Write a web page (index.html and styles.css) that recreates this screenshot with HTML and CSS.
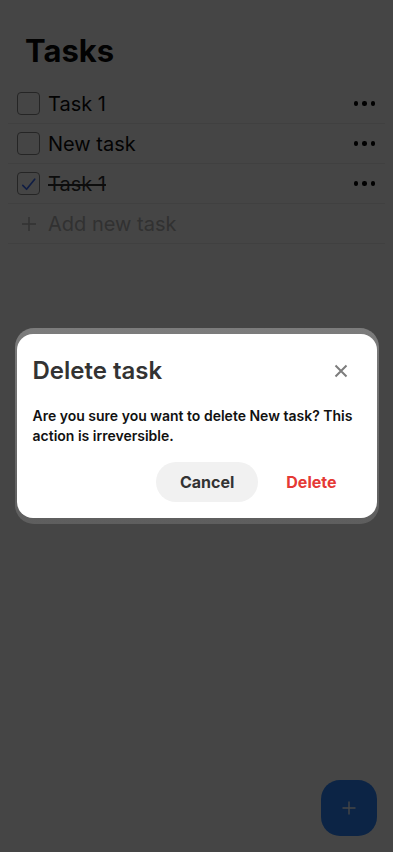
FILE: index.html
```html
<!DOCTYPE html>
<html lang="en">
<head>
<meta charset="utf-8">
<meta name="viewport" content="width=device-width, initial-scale=1">
<title>Tasks</title>
<link rel="stylesheet" href="styles.css">
</head>
<body>
<main class="page">
  <h1 class="title">Tasks</h1>
  <ul class="list">
    <li class="row">
      <span class="check"></span>
      <span class="label">Task 1</span>
      <span class="more"><i></i><i></i><i></i></span>
    </li>
    <li class="row">
      <span class="check"></span>
      <span class="label">New task</span>
      <span class="more"><i></i><i></i><i></i></span>
    </li>
    <li class="row">
      <span class="check checked">
        <svg viewBox="0 0 22 22" width="22" height="22"><path d="M5 12.5 L9 16.5 L17.5 6" fill="none" stroke="#3b6cf6" stroke-width="1.8" stroke-linecap="round" stroke-linejoin="round"/></svg>
      </span>
      <span class="label done">Task 1</span>
      <span class="more"><i></i><i></i><i></i></span>
    </li>
    <li class="row add">
      <span class="plus">
        <svg viewBox="0 0 16 16" width="16" height="16"><path d="M8 1 V15 M1 8 H15" stroke="#b8b8b8" stroke-width="1.5" fill="none"/></svg>
      </span>
      <span class="label muted">Add new task</span>
    </li>
  </ul>
  <button class="fab" aria-label="Add">
    <svg viewBox="0 0 16 16" width="16" height="16"><path d="M8 1.5 V14.5 M1.5 8 H14.5" stroke="#ffffff" stroke-width="1.4" fill="none"/></svg>
  </button>
</main>
<div class="overlay">
  <div class="dialog">
    <div class="dialog-head">
      <h2 class="dialog-title">Delete task</h2>
      <span class="close">
        <svg viewBox="0 0 14 14" width="14" height="14"><path d="M1.5 1.5 L12.5 12.5 M12.5 1.5 L1.5 12.5" stroke="#7d7d7d" stroke-width="2" fill="none"/></svg>
      </span>
    </div>
    <p class="dialog-body">Are you sure you want to delete New task? This action is irreversible.</p>
    <div class="actions">
      <button class="btn cancel">Cancel</button>
      <button class="btn delete">Delete</button>
    </div>
  </div>
</div>
</body>
</html>
```

FILE: styles.css
```css
* { box-sizing: border-box; }
html, body { margin: 0; padding: 0; }
body {
  width: 393px;
  height: 852px;
  background: #ffffff;
  font-family: Inter, "Noto Sans", "Liberation Sans", sans-serif;
  color: #111;
  overflow: hidden;
}
.page {
  position: relative;
  height: 852px;
  padding: 33px 8px 0 8px;
}
.title {
  margin: 0 0 15px 17px;
  font-size: 31px;
  line-height: 36px;
  font-weight: 700;
  color: #0a0a0a;
}
.list {
  list-style: none;
  margin: 0;
  padding: 0;
}
.row {
  display: flex;
  align-items: center;
  height: 40px;
  padding: 0 10px 0 9px;
  border-bottom: 1px solid #ececec;
}
.check {
  width: 23px;
  height: 23px;
  border: 1.5px solid #8a8a8a;
  border-radius: 4px;
  flex: none;
  display: flex;
  align-items: center;
  justify-content: center;
}
.check svg { display: block; }
.label {
  margin-left: 8px;
  font-size: 20px;
  line-height: 24px;
  color: #0d0d0d;
  flex: 1;
}
.label.done {
  text-decoration: line-through;
  color: #333;
}
.label.muted { color: #b5b5b5; }
.plus {
  width: 23px;
  height: 23px;
  display: flex;
  align-items: center;
  justify-content: center;
  flex: none;
}
.plus svg { display: block; }
.more {
  display: flex;
  gap: 4px;
  align-items: center;
}
.more i {
  display: block;
  width: 4.5px;
  height: 4.5px;
  border-radius: 50%;
  background: #000;
}
.fab {
  position: absolute;
  right: 16px;
  bottom: 16px;
  width: 56px;
  height: 56px;
  border: 0;
  border-radius: 19px;
  background: #2c86ff;
  display: flex;
  align-items: center;
  justify-content: center;
  padding: 0;
}
.fab svg { display: block; }
.overlay {
  position: fixed;
  inset: 0;
  background: rgba(0, 0, 0, 0.73);
  display: flex;
  align-items: center;
  justify-content: center;
}
.dialog {
  position: relative;
  width: 360px;
  background: #fff;
  border-radius: 16px;
  padding: 23px 16px 16px 16px;
}
.dialog::before {
  content: "";
  position: absolute;
  inset: -6px -2px;
  border-radius: 19px;
  background: linear-gradient(#7c7c7c, #6a6a6a 60%, #5e5e5e);
  z-index: -1;
}
.dialog-head {
  display: flex;
  align-items: center;
  justify-content: space-between;
  height: 28px;
  padding-right: 13px;
}
.dialog-title {
  margin: 0;
  font-size: 24px;
  line-height: 28px;
  font-weight: 600;
  color: #333;
}
.close { display: flex; }
.close svg { display: block; }
.dialog-body {
  margin: 21px 0 0 0;
  font-size: 14px;
  line-height: 20px;
  font-weight: 600;
  color: #111;
}
.actions {
  margin-top: 16px;
  display: flex;
  justify-content: flex-end;
  gap: 4px;
}
.btn {
  height: 40px;
  border: 0;
  border-radius: 20px;
  padding: 0 24px;
  font-family: inherit;
  font-size: 16px;
  font-weight: 700;
  background: transparent;
}
.cancel {
  background: #f1f1f1;
  color: #333;
}
.delete {
  color: #e53935;
}
```
